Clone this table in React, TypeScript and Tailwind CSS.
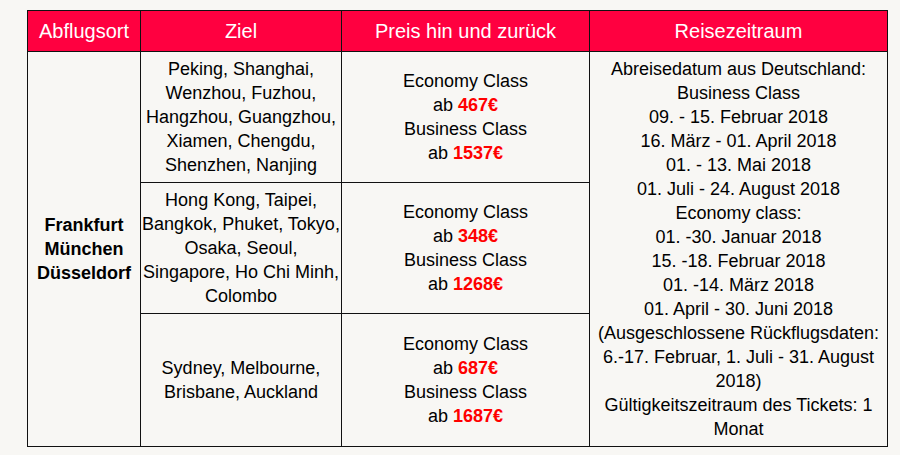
import React from "react";

const Price = ({ eco, bus }: { eco: string; bus: string }) => (
  <>
    <div>Economy Class</div>
    <div>
      ab <span className="font-bold text-[#ff0000]">{eco}</span>
    </div>
    <div>Business Class</div>
    <div>
      ab <span className="font-bold text-[#ff0000]">{bus}</span>
    </div>
  </>
);

const Lines = ({ lines }: { lines: string[] }) => (
  <>
    {lines.map((l) => (
      <div key={l} className="whitespace-nowrap">
        {l}
      </div>
    ))}
  </>
);

export default function App() {
  const td = "border border-[#111] px-[5px] py-[5px] text-center align-middle";
  const tdz = "border border-[#111] px-0 py-[5px] text-center align-middle";
  const th = "border border-[#111] px-[5px] py-[8px] text-center font-normal text-white text-[20px] leading-[24px]";
  return (
    <div className="min-h-[455px] w-[900px] bg-[#f8f7f4] pt-[10px] pl-[27px]" style={{ fontFamily: '"Liberation Sans", Arial, sans-serif' }}>
      <table className="w-[860px] table-fixed border-collapse text-[18px] leading-[24px] text-black">
        <colgroup>
          <col className="w-[113px]" />
          <col className="w-[201px]" />
          <col className="w-[248px]" />
          <col className="w-[298px]" />
        </colgroup>
        <thead>
          <tr className="bg-[#ff0040]">
            <th className={th}>Abflugsort</th>
            <th className={th}>Ziel</th>
            <th className={th}>Preis hin und zurück</th>
            <th className={th}>Reisezeitraum</th>
          </tr>
        </thead>
        <tbody>
          <tr className="h-[130px]">
            <td rowSpan={3} className={`${td} font-bold`}>
              Frankfurt
              <br />
              München
              <br />
              Düsseldorf
            </td>
            <td className={tdz}>
              <Lines lines={["Peking, Shanghai,", "Wenzhou, Fuzhou,", "Hangzhou, Guangzhou,", "Xiamen, Chengdu,", "Shenzhen, Nanjing"]} />
            </td>
            <td className={td}>
              <Price eco="467€" bus="1537€" />
            </td>
            <td rowSpan={3} className={td}>
              <div>Abreisedatum aus Deutschland:</div>
              <div>Business Class</div>
              <div>09. - 15. Februar 2018</div>
              <div>16. März - 01. April 2018</div>
              <div>01. - 13. Mai 2018</div>
              <div>01. Juli - 24. August 2018</div>
              <div>Economy class:</div>
              <div>01. -30. Januar 2018</div>
              <div>15. -18. Februar 2018</div>
              <div>01. -14. März 2018</div>
              <div>01. April - 30. Juni 2018</div>
              <div>(Ausgeschlossene Rückflugsdaten: 6.-17. Februar, 1. Juli - 31. August 2018)</div>
              <div>Gültigkeitszeitraum des Tickets: 1 Monat</div>
            </td>
          </tr>
          <tr className="h-[130px]">
            <td className={tdz}>
              <Lines lines={["Hong Kong, Taipei,", "Bangkok, Phuket, Tokyo,", "Osaka, Seoul,", "Singapore, Ho Chi Minh,", "Colombo"]} />
            </td>
            <td className={td}>
              <Price eco="348€" bus="1268€" />
            </td>
          </tr>
          <tr className="h-[133px]">
            <td className={td}>Sydney, Melbourne, Brisbane, Auckland</td>
            <td className={td}>
              <Price eco="687€" bus="1687€" />
            </td>
          </tr>
        </tbody>
      </table>
    </div>
  );
}
